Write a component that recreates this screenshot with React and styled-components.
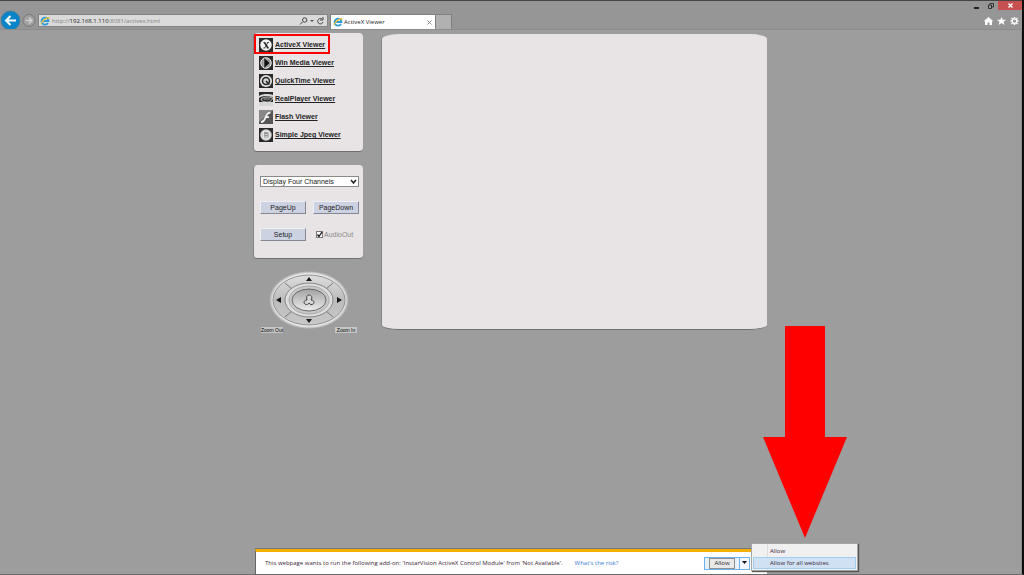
import React from "react";
import styled, { createGlobalStyle, css } from "styled-components";

const ui = '"Open Sans", "Noto Sans", sans-serif';
const arial = '"Liberation Sans", Arial, sans-serif';

const Global = createGlobalStyle`
  *, *::before, *::after { box-sizing: border-box; }
  body { margin: 0; background: #9d9d9d; font: 7px/10px ${arial}; color: #222; }
  button, select, input { font: inherit; color: inherit; margin: 0; padding: 0; }
  svg { display: block; flex: none; }
`;

const Window = styled.div`
  min-height: 100vh;
  display: flex;
  flex-direction: column;
  overflow: hidden;
  border-right: 2px solid #0c0c0c;
  border-bottom: 1px solid #6b6b6b;
  box-shadow: inset -1px 0 #8a8a8a;
`;

const Header = styled.header`
  background: #969696;
  border-top: 1px solid #464446;
  border-bottom: 1px solid #8c8c8c;
  font-family: ${ui};
  font-size: 6px;
`;

const TitleBar = styled.div`
  height: 9px;
  display: flex;
  justify-content: flex-end;
`;

const WindowButton = styled.button`
  width: ${(p) => (p.$close ? 24 : 14)}px;
  height: 9px;
  border: 0;
  display: grid;
  place-items: center;
  background: ${(p) => (p.$close ? "#c75050" : "transparent")};
`;

const Toolbar = styled.div`
  height: 19px;
  display: flex;
  align-items: flex-end;
  overflow: hidden;
`;

const PlainButton = styled.button`
  border: 0;
  background: none;
  display: block;
`;

const NavButtons = styled.nav`
  display: flex;
  align-items: flex-start;
  width: 38px;
  height: 19px;
  flex: none;
`;

const AddressBox = styled.form`
  flex: 0 1 290px;
  height: 13px;
  margin-bottom: 2px;
  padding: 0 2px 0 1px;
  display: flex;
  align-items: center;
  gap: 1px;
  background: #dadada;
  border: 1px solid #848484;
`;

const Address = styled.div`
  flex: 1;
  padding-left: 1px;
  color: #808080;
  white-space: nowrap;
  overflow: hidden;
  b { color: #222; font-weight: 400; }
`;

const Tab = styled.div`
  flex: 0 1 106px;
  height: 15px;
  margin-left: 2px;
  padding: 0 3px 0 2px;
  display: flex;
  align-items: center;
  gap: 1px;
  background: #fff;
  border: 1px solid #808080;
  border-bottom: 0;
  white-space: nowrap;
  span { flex: 1; }
`;

const NewTab = styled.button`
  width: 16px;
  height: 15px;
  background: #b1b1b1;
  border: 1px solid #808080;
  border-width: 1px 1px 0 0;
`;

const Tools = styled.div`
  display: flex;
  gap: 4px;
  margin-left: auto;
  padding: 0 3px 4px 0;
`;

const Main = styled.main`
  display: flex;
  justify-content: center;
  align-items: flex-start;
  gap: 18px;
  padding: 3px 2px 16px 0;
`;

const Sidebar = styled.aside`
  flex: 0 0 110px;
  display: flex;
  flex-direction: column;
`;

const panel = css`
  background: #e8e4e6;
  border-left: 1px solid #858585;
  border-bottom: 1px solid #6f6f6f;
`;

const LinkPanel = styled.nav`
  ${panel}
  border-radius: 4px;
  height: 119px;
  padding: 3px 0 0 5px;
  display: flex;
  flex-direction: column;
  align-items: flex-start;
`;

const ViewerLink = styled.a`
  height: 18px;
  display: flex;
  align-items: center;
  gap: 2px;
  position: relative;
  color: #222;
  font-weight: 700;
  white-space: nowrap;
  ${(p) =>
    p.$marked &&
    css`
      &::after {
        content: "";
        position: absolute;
        inset: -2px -5px 0 -5px;
        border: 2px solid #f00;
      }
    `}
`;

const ControlPanel = styled.section`
  ${panel}
  border-radius: 4px;
  margin-top: 13px;
  height: 94px;
  padding: 11px 4px 0 6px;
  display: grid;
  grid-template-columns: 46px 46px;
  grid-template-rows: 11px 13px 13px;
  justify-content: space-between;
  row-gap: 14px;
  align-content: start;
`;

const ChannelBox = styled.div`
  grid-column: 1 / -1;
  position: relative;
  svg { position: absolute; right: 2px; top: 3px; pointer-events: none; }
`;

const ChannelSelect = styled.select`
  appearance: none;
  display: block;
  width: 100%;
  height: 11px;
  padding: 0 10px 0 2px;
  border: 1px solid #8a8a8a;
  border-radius: 0;
  background: #fff;
  line-height: 9px;
`;

const PanelButton = styled.button`
  background: #ccd2e2;
  border: 1px solid;
  border-color: #eef0f6 #858891 #858891 #eef0f6;
  line-height: 11px;
`;

const CheckLabel = styled.label`
  display: flex;
  align-items: center;
  gap: 1px;
  padding-left: 3px;
  color: #8b8989;
`;

const Check = styled.input`
  appearance: none;
  width: 7px;
  height: 7px;
  border: 1px solid #777;
  background: #fff;
`;

const CheckWrap = styled.span`
  position: relative;
  display: flex;
  svg { position: absolute; inset: 0; pointer-events: none; }
`;

const PanTilt = styled.section`
  margin-top: 10px;
  display: flex;
  flex-direction: column;
  align-items: center;
`;

const ZoomRow = styled.div`
  align-self: stretch;
  display: flex;
  justify-content: space-between;
  margin-top: -4px;
  padding: 0 6px 0 8px;
`;

const ZoomButton = styled.button`
  border: 0;
  width: 22px;
  height: 6px;
  background: #c6c6c6;
  color: #000;
  && { font: 5px/6px ${arial}; }
  white-space: nowrap;
  display: flex;
  justify-content: center;
`;

const Viewer = styled.section`
  ${panel}
  flex: 0 1 386px;
  height: 296px;
  margin-top: 1px;
  border-radius: 18px / 5px;
`;

const Notice = styled.section`
  position: relative;
  width: 512px;
  max-width: 100%;
  height: 25px;
  margin: auto auto 0;
  padding: 0 17px 0 9px;
  display: flex;
  align-items: center;
  background: #fff;
  border-top: 3px solid #f4ae00;
  border-left: 1px solid #666;
  box-shadow: 0 -1px #777;
  font-family: ${ui};
  font-size: 6px;
  white-space: nowrap;
  a { color: #3a78d8; text-decoration: none; margin-left: 12px; }
`;

const Message = styled.span`
  color: #3b2338;
`;

const SplitButton = styled.div`
  position: relative;
  display: flex;
  width: 46px;
  height: 13px;
  margin-left: auto;
  background: #e8f1fa;
  border: 1px solid #6eb2ee;
`;

const AllowButton = styled.button`
  flex: 1;
  margin: 0 4px;
  border: 1px solid #8f8f8f;
  background: #e9e9e9;
  line-height: 9px;
`;

const MoreButton = styled.button`
  width: 10px;
  border: 0;
  border-left: 1px solid #6eb2ee;
  background: #f3f7fb;
  display: grid;
  place-items: center;
`;

const Menu = styled.div`
  position: absolute;
  left: 46px;
  bottom: -2px;
  width: 107px;
  padding: 1px;
  background: linear-gradient(90deg, #f0f0f0 15px, #dedede 15px, #dedede 16px, #f0f0f0 16px);
  border: 1px solid #a5a5a5;
  box-shadow: 1px 1px 1px #555;
`;

const MenuItem = styled.button`
  display: block;
  width: 100%;
  height: 12px;
  padding-left: 16px;
  text-align: left;
  line-height: 10px;
  color: #3b2338;
  background: ${(p) => (p.$active ? "#cfe1f3" : "transparent")};
  border: 1px solid ${(p) => (p.$active ? "#a4cdf2" : "transparent")};
`;

const Pointer = styled.svg`
  position: absolute;
  left: 507px;
  bottom: 36px;
`;

const IeLogo = () => (
  <svg width="10" height="10" viewBox="0 0 20 20" aria-hidden="true">
    <path d="M16 14a7 7 0 1 1 1-4H5" fill="none" stroke="#2d9bdc" strokeWidth="3.6" />
    <path d="M2 18C-1 14 8 3 17 2c3 0 2 4 1 6 0-3-1-4-3-3C9 7 3 14 2 18z" fill="#f2bd2c" />
  </svg>
);

const glyphs = {
  activex: (
    <>
      <circle cx="14" cy="14" r="11.5" fill="#f4f4f4" />
      <path d="M8.500 9h4M16 9h4M8.500 20h4M15.500 20h4.500" stroke="#222" strokeWidth="1.500" />
      <path d="M11 9l7 11" stroke="#222" strokeWidth="3" />
      <path d="M18 9l-7 11" stroke="#222" strokeWidth="1.500" />
    </>
  ),
  media: (
    <>
      <circle cx="14" cy="14" r="10.5" fill="#999" stroke="#eee" strokeWidth="2" />
      <path d="M10 3v22l12-11z" fill="#111" stroke="#ddd" strokeWidth="1" />
    </>
  ),
  quicktime: (
    <>
      <circle cx="14" cy="14" r="12" fill="#e4e4e4" />
      <circle cx="14" cy="14" r="7" fill="#d4d4d4" stroke="#222" strokeWidth="3" />
      <path d="M14 14l7 7" stroke="#222" strokeWidth="3" />
    </>
  ),
  real: (
    <>
      <path d="M0 20h28v8H0z" fill="#d6d6d6" />
      <path d="M0 8c7-5 20-5 28-2v5C19 7 8 7 0 12z" fill="#d8d8d8" />
      <path d="M4 14c5-5 18-5 23-2-2 8-8 9-14 8-5 0-9-3-9-6z" fill="#333" stroke="#eee" strokeWidth="1.500" />
      <path d="M9 14h13" stroke="#999" strokeWidth="2" />
    </>
  ),
  flash: (
    <>
      <path d="M0 0h28v28H0z" fill="#555" />
      <path d="M0 0h28L0 24z" fill="#888" />
      <path d="M23 5c-7 0-8 6-10 10s-3 9-9 9M12 14h8" fill="none" stroke="#f4f4f4" strokeWidth="3.500" />
    </>
  ),
  jpeg: (
    <>
      <circle cx="14" cy="14" r="11.5" fill="#d5d5d5" />
      <path d="M9 7h9l2 3v10H9z" fill="#999" stroke="#f5f5f5" strokeWidth="1.500" />
      <path d="M11 13h7M11 17h7" stroke="#eee" />
    </>
  ),
};

const ViewerIcon = ({ name }) => (
  <svg width="14" height="14" viewBox="0 0 28 28" aria-hidden="true">
    <path d="M0 0h28v28H0z" fill="#292929" />
    {glyphs[name]}
  </svg>
);

const viewers = [
  ["activex", "ActiveX Viewer"],
  ["media", "Win Media Viewer"],
  ["quicktime", "QuickTime Viewer"],
  ["real", "RealPlayer Viewer"],
  ["flash", "Flash Viewer"],
  ["jpeg", "Simple Jpeg Viewer"],
];

const Joystick = () => (
  <svg width="82" height="62" viewBox="0 0 82 62" role="img" aria-label="Pan and tilt control">
    <defs>
      <radialGradient id="halo">
        <stop offset=".9" stopColor="#eee" />
        <stop offset="1" stopColor="#eee" stopOpacity="0" />
      </radialGradient>
      <linearGradient id="metal" x2="0" y2="1">
        <stop stopColor="#ddd" />
        <stop offset=".5" stopColor="#bcbcbc" />
        <stop offset="1" stopColor="#c8c8c8" />
      </linearGradient>
      <linearGradient id="knob" x2="0" y2="1">
        <stop stopColor="#a2a2a2" />
        <stop offset="1" stopColor="#ededed" />
      </linearGradient>
    </defs>
    <ellipse cx="42" cy="31" rx="40" ry="29" fill="url(#halo)" />
    <ellipse cx="42" cy="31" rx="36" ry="25" fill="url(#metal)" stroke="#929292" />
    <path d="M18 14l7 6M66 14l-7 6M18 48l7-6M66 48l-7-6" stroke="#777" />
    <ellipse cx="42" cy="31" rx="24" ry="17" fill="#ddd" stroke="#858585" />
    <ellipse cx="42" cy="31" rx="20" ry="14" fill="#c7c7c7" stroke="#aaa" />
    <ellipse cx="42" cy="31" rx="17" ry="11" fill="url(#knob)" stroke="#696969" />
    <path d="M39 12h6l-3-4zM39 50h6l-3 4zM14 28v6l-5-3zM70 28v6l5-3z" fill="#181818" />
    <path d="M40 31c-1-3 0-5 2-5s4 2 2 5c3 0 4 3 2 4-1 1-3 1-4-1-1 2-4 2-5 0 0-2 1-3 3-3z" fill="#d6d6d6" stroke="#444" />
  </svg>
);

export default function App() {
  return (
    <>
      <Global />
      <Window>
        <Header>
          <TitleBar>
            <WindowButton aria-label="Minimize">
              <svg width="6" height="6"><path d="M0 5h5" stroke="#222" strokeWidth="2" /></svg>
            </WindowButton>
            <WindowButton aria-label="Restore">
              <svg width="6" height="6"><path d="M2 2V.5h3.500V4H4M.5 2h3v3.500h-3z" fill="none" stroke="#333" /></svg>
            </WindowButton>
            <WindowButton $close aria-label="Close">
              <svg width="5" height="5"><path d="M.5.5l4 4M4.500.5l-4 4" stroke="#fff" strokeWidth="1.300" /></svg>
            </WindowButton>
          </TitleBar>
          <Toolbar>
            <NavButtons>
              <PlainButton aria-label="Back">
                <svg width="21" height="20" viewBox="0 0 21 20">
                  <circle cx="10.5" cy="10.5" r="9.5" fill="#0a84c8" stroke="#4b7f9c" />
                  <path d="M16 10.500H6M10.500 6L6 10.500l4.500 4.500" fill="none" stroke="#fff" strokeWidth="2" />
                </svg>
              </PlainButton>
              <PlainButton aria-label="Forward">
                <svg width="15" height="19" viewBox="0 0 15 19">
                  <circle cx="8" cy="10.5" r="6" fill="#a0a0a0" stroke="#777" />
                  <path d="M4.500 10.500h6M8 7.500l3 3-3 3" fill="none" stroke="#d0d0d0" strokeWidth="1.500" />
                </svg>
              </PlainButton>
            </NavButtons>
            <AddressBox onSubmit={(e) => e.preventDefault()}>
              <IeLogo />
              <Address>http://<b>192.168.1.110</b>:8081/activex.html</Address>
              <PlainButton type="button" aria-label="Search">
                <svg width="9" height="8"><path d="M3.500 5L1 7.500M3.500 3a2.200 2.200 0 1 0 4.400 0a2.200 2.200 0 1 0-4.400 0" fill="none" stroke="#444" /></svg>
              </PlainButton>
              <PlainButton type="button" aria-label="Address list">
                <svg width="6" height="4"><path d="M1 1h4L3 3z" fill="#555" /></svg>
              </PlainButton>
              <PlainButton type="button" aria-label="Refresh">
                <svg width="9" height="8"><path d="M6.500 2.500A2.700 2.700 0 1 0 7 5M7 0v3H4" fill="none" stroke="#444" /></svg>
              </PlainButton>
            </AddressBox>
            <Tab>
              <IeLogo />
              <span>ActiveX Viewer</span>
              <PlainButton aria-label="Close tab">
                <svg width="5" height="5"><path d="M.5.5l4 4M4.500.5l-4 4" stroke="#888" /></svg>
              </PlainButton>
            </Tab>
            <NewTab aria-label="New tab" />
            <Tools>
              <PlainButton aria-label="Home">
                <svg width="9" height="8" viewBox="0 0 18 16"><path d="M9 0l9 8-2 1v7h-5v-5H7v5H2V9L0 8z" fill="#fff" /></svg>
              </PlainButton>
              <PlainButton aria-label="Favorites">
                <svg width="9" height="8" viewBox="0 0 18 16"><path d="M9 0l2.500 5.500H18L13 9.500l2 6.500-6-4-6 4 2-6.500-5-4h6.500z" fill="#fff" /></svg>
              </PlainButton>
              <PlainButton aria-label="Tools">
                <svg width="9" height="8" viewBox="0 0 18 16">
                  <circle cx="9" cy="8" r="4.5" fill="none" stroke="#fff" strokeWidth="2.5" />
                  <path d="M9 0v3M9 13v3M1 8h3M14 8h3M3 2l2 2M13 12l2 2M15 2l-2 2M5 12l-2 2" stroke="#fff" strokeWidth="3" />
                </svg>
              </PlainButton>
            </Tools>
          </Toolbar>
        </Header>

        <Main>
          <Sidebar>
            <LinkPanel>
              {viewers.map(([icon, label], i) => (
                <ViewerLink key={icon} href="#" $marked={i === 0}>
                  <ViewerIcon name={icon} />
                  {label}
                </ViewerLink>
              ))}
            </LinkPanel>
            <ControlPanel>
              <ChannelBox>
                <ChannelSelect aria-label="Channels">
                  <option>Display Four Channels</option>
                </ChannelSelect>
                <svg width="7" height="5"><path d="M1 1l2.500 3L6 1" fill="none" stroke="#222" strokeWidth="1.500" /></svg>
              </ChannelBox>
              <PanelButton>PageUp</PanelButton>
              <PanelButton>PageDown</PanelButton>
              <PanelButton>Setup</PanelButton>
              <CheckLabel>
                <CheckWrap>
                  <Check type="checkbox" defaultChecked />
                  <svg width="7" height="7"><path d="M1.500 3.500l1.500 2L6 1" fill="none" stroke="#111" strokeWidth="1.300" /></svg>
                </CheckWrap>
                AudioOut
              </CheckLabel>
            </ControlPanel>
            <PanTilt>
              <Joystick />
              <ZoomRow>
                <ZoomButton>Zoom Out</ZoomButton>
                <ZoomButton>Zoom In</ZoomButton>
              </ZoomRow>
            </PanTilt>
          </Sidebar>
          <Viewer aria-label="Video" />
        </Main>

        <Notice>
          <Message>
            This webpage wants to run the following add-on: 'InstarVision ActiveX Control Module' from 'Not Available'.
          </Message>
          <a href="#">What's the risk?</a>
          <SplitButton>
            <AllowButton>Allow</AllowButton>
            <MoreButton aria-label="More options">
              <svg width="5" height="4"><path d="M0 0h5L2.500 3z" fill="#111" /></svg>
            </MoreButton>
            <Menu>
              <MenuItem>Allow</MenuItem>
              <MenuItem $active>Allow for all websites</MenuItem>
            </Menu>
          </SplitButton>
          <Pointer width="84" height="212" viewBox="0 0 84 212" aria-hidden="true">
            <path d="M22 0h40v111h22L42 212 0 111h22z" fill="#f00" />
          </Pointer>
        </Notice>
      </Window>
    </>
  );
}
